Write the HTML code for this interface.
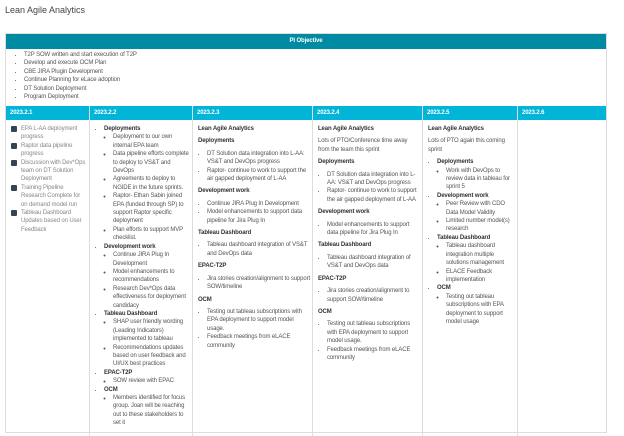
<!DOCTYPE html>
<html><head><style>
*{margin:0;padding:0;box-sizing:border-box}
body{width:624px;height:421px;overflow:hidden;background:#fff;font-family:"Liberation Sans",sans-serif;font-size:6px;color:#555;position:relative;letter-spacing:-0.12px}
.t{position:absolute;left:5px;top:5px;font-size:9px;color:#444;letter-spacing:0}
.tbl{position:absolute;left:5px;top:33px;width:602px;height:400px;border:1px solid #ddd}
.h1{position:absolute;left:0;top:0;width:600px;height:15px;background:#008ba3;color:#fff;font-weight:bold;text-align:center;line-height:15px}
.obj{position:absolute;left:9px;top:17px;line-height:8.4px}
.row{position:absolute;top:72px;left:0;width:600px;height:14px;background:#00b5d8}
.col{position:absolute;top:72px;height:330px;border-left:1px solid #ddd}
.col .hd{height:14px;background:#00b5d8;color:#fff;font-weight:bold;line-height:14px;padding-left:4px}
.c{padding:5px 2px 0 5px;line-height:8.4px}
b{color:#333}
ul{padding-left:9px;list-style:disc}
ul ul{list-style:circle;padding-left:9px}
p{margin-bottom:4px}
.ck{display:flex;gap:4px;color:#888}
.ck i{flex:0 0 6px;height:6px;background:#345;margin-top:1px;border-radius:1px}
.gap{margin-bottom:4px}
</style></head><body>
<div class="t">Lean Agile Analytics</div>
<div class="tbl">
<div class="h1">PI Objective</div>
<ul class="obj">
<li>T2P SOW written and start execution of T2P</li>
<li>Develop and execute OCM Plan</li>
<li>CBE JIRA Plugin Development</li>
<li>Continue Planning for eLace adoption</li>
<li>DT Solution Deployment</li>
<li>Program Deployment</li>
</ul>
<div class="row"></div>
<div class="col" style="left:0;width:83px;border-left:0"><div class="hd">2023.2.1</div><div class="c">
<div class="ck"><i></i><span>EPA L-AA deployment progress</span></div>
<div class="ck"><i></i><span>Raptor data pipeline progress</span></div>
<div class="ck"><i></i><span>Discussion with Dev*Ops team on DT Solution Deployment</span></div>
<div class="ck"><i></i><span>Training Pipeline Research Complete for on demand model run</span></div>
<div class="ck"><i></i><span>Tableau Dashboard Updates based on User Feedback</span></div>
</div></div>
<div class="col" style="left:83px;width:103px"><div class="hd">2023.2.2</div><div class="c">
<ul><li><b>Deployments</b><ul>
<li>Deployment to our own internal EPA team</li>
<li>Data pipeline efforts complete to deploy to VS&amp;T and DevOps</li>
<li>Agreements to deploy to NGIDE in the future sprints.</li>
<li>Raptor- Ethan Sabin joined EPA (funded through SP) to support Raptor specific deployment</li>
<li>Plan efforts to support MVP checklist.</li></ul></li>
<li><b>Development work</b><ul>
<li>Continue JIRA Plug In Development</li>
<li>Model enhancements to recommendations</li>
<li>Research Dev*Ops data effectiveness for deployment candidacy</li></ul></li>
<li><b>Tableau Dashboard</b><ul>
<li>SHAP user friendly wording (Leading Indicators) implemented to tableau</li>
<li>Recommendations updates based on user feedback and UI/UX best practices</li></ul></li>
<li><b>EPAC-T2P</b><ul><li>SOW review with EPAC</li></ul></li>
<li><b>OCM</b><ul><li>Members identified for focus group. Joan will be reaching out to these stakeholders to set it</li></ul></li>
</ul></div></div>
<div class="col" style="left:186px;width:120px"><div class="hd">2023.2.3</div><div class="c">
<p><b>Lean Agile Analytics</b></p>
<p><b>Deployments</b></p>
<ul class="gap"><li>DT Solution data integration into L-AA: VS&amp;T and DevOps progress</li><li>Raptor- continue to work to support the air gapped deployment of L-AA</li></ul>
<p><b>Development work</b></p>
<ul class="gap"><li>Continue JIRA Plug In Development</li><li>Model enhancements to support data pipeline for Jira Plug In</li></ul>
<p><b>Tableau Dashboard</b></p>
<ul class="gap"><li>Tableau dashboard integration of VS&amp;T and DevOps data</li></ul>
<p><b>EPAC-T2P</b></p>
<ul class="gap"><li>Jira stories creation/alignment to support SOW/timeline</li></ul>
<p><b>OCM</b></p>
<ul><li>Testing out tableau subscriptions with EPA deployment to support model usage.</li><li>Feedback meetings from eLACE community</li></ul>
</div></div>
<div class="col" style="left:306px;width:110px"><div class="hd">2023.2.4</div><div class="c">
<p><b>Lean Agile Analytics</b></p>
<p>Lots of PTO/Conference time away from the team this sprint</p>
<p><b>Deployments</b></p>
<ul class="gap"><li>DT Solution data integration into L-AA: VS&amp;T and DevOps progress</li><li>Raptor- continue to work to support the air gapped deployment of L-AA</li></ul>
<p><b>Development work</b></p>
<ul class="gap"><li>Model enhancements to support data pipeline for Jira Plug In</li></ul>
<p><b>Tableau Dashboard</b></p>
<ul class="gap"><li>Tableau dashboard integration of VS&amp;T and DevOps data</li></ul>
<p><b>EPAC-T2P</b></p>
<ul class="gap"><li>Jira stories creation/alignment to support SOW/timeline</li></ul>
<p><b>OCM</b></p>
<ul><li>Testing out tableau subscriptions with EPA deployment to support model usage.</li><li>Feedback meetings from eLACE community</li></ul>
</div></div>
<div class="col" style="left:416px;width:95px"><div class="hd">2023.2.5</div><div class="c">
<p><b>Lean Agile Analytics</b></p>
<p>Lots of PTO again this coming sprint</p>
<ul><li><b>Deployments</b><ul><li>Work with DevOps to review data in tableau for sprint 5</li></ul></li>
<li><b>Development work</b><ul><li>Peer Review with CDO Data Model Validity</li><li>Limited number model(s) research</li></ul></li>
<li><b>Tableau Dashboard</b><ul><li>Tableau dashboard integration multiple solutions management</li><li>ELACE Feedback implementation</li></ul></li>
<li><b>OCM</b><ul><li>Testing out tableau subscriptions with EPA deployment to support model usage</li></ul></li></ul>
</div></div>
<div class="col" style="left:511px;width:89px"><div class="hd">2023.2.6</div></div>
</div>
</body></html>
